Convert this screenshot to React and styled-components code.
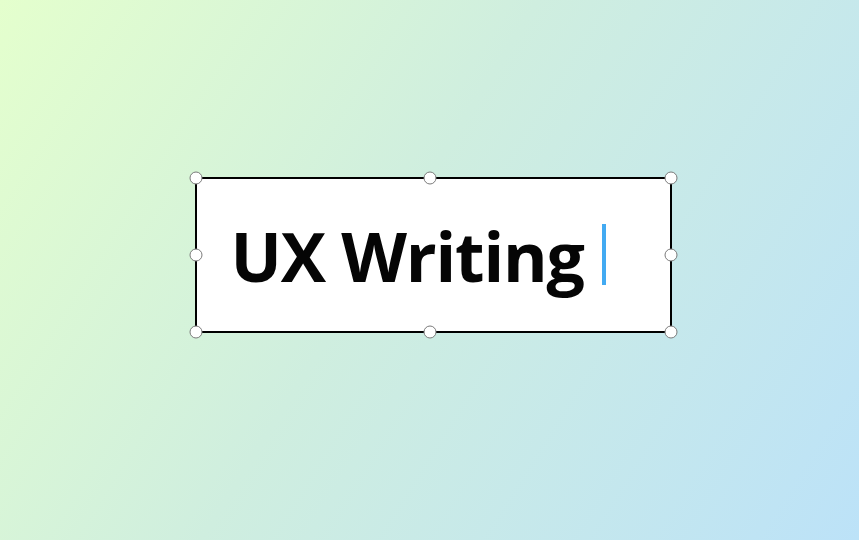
import React from "react";
import styled, { createGlobalStyle } from "styled-components";

const Global = createGlobalStyle`
  html, body { margin: 0; padding: 0; }
  body { font-family: "Open Sans", "Noto Sans", sans-serif; }
`;

const Page = styled.div`
  width: 859px;
  height: 540px;
  background: linear-gradient(122deg, #e4ffcd 0%, #cfeedf 45%, #bce2f8 100%);
  display: flex;
  align-items: center;
  justify-content: center;
`;

const Frame = styled.div`
  position: relative;
  box-sizing: border-box;
  width: 477px;
  height: 156px;
  margin-top: -30px;
  margin-left: 7px;
  background: #ffffff;
  border: 2px solid #000;
  display: flex;
  align-items: center;
  padding-left: 34px;
`;

const Text = styled.span`
  font-family: "Open Sans", sans-serif;
  font-weight: 700;
  font-size: 68px;
  color: #050505;
  letter-spacing: -1.2px;
  line-height: 1;
  margin-top: 2px;
`;

const Caret = styled.span`
  display: inline-block;
  width: 4px;
  height: 61px;
  background: #42aaf2;
  margin-left: 18px;
  margin-top: -2px;
`;

const Handle = styled.span`
  position: absolute;
  box-sizing: border-box;
  width: 13px;
  height: 13px;
  border-radius: 50%;
  background: #fff;
  border: 1px solid #7a7a7a;
  left: ${(p) => p.x};
  top: ${(p) => p.y};
  transform: translate(-50%, -50%);
`;

const spots = [
  ["-1px", "-1px"], ["calc(50% - 3px)", "-1px"], ["calc(100% + 1px)", "-1px"],
  ["-1px", "50%"], ["calc(100% + 1px)", "50%"],
  ["-1px", "calc(100% + 1px)"], ["calc(50% - 3px)", "calc(100% + 1px)"], ["calc(100% + 1px)", "calc(100% + 1px)"],
];

export default function App() {
  return (
    <>
      <Global />
      <Page>
        <Frame>
          <Text>UX Writing</Text>
          <Caret />
          {spots.map(([x, y], i) => (
            <Handle key={i} x={x} y={y} />
          ))}
        </Frame>
      </Page>
    </>
  );
}
